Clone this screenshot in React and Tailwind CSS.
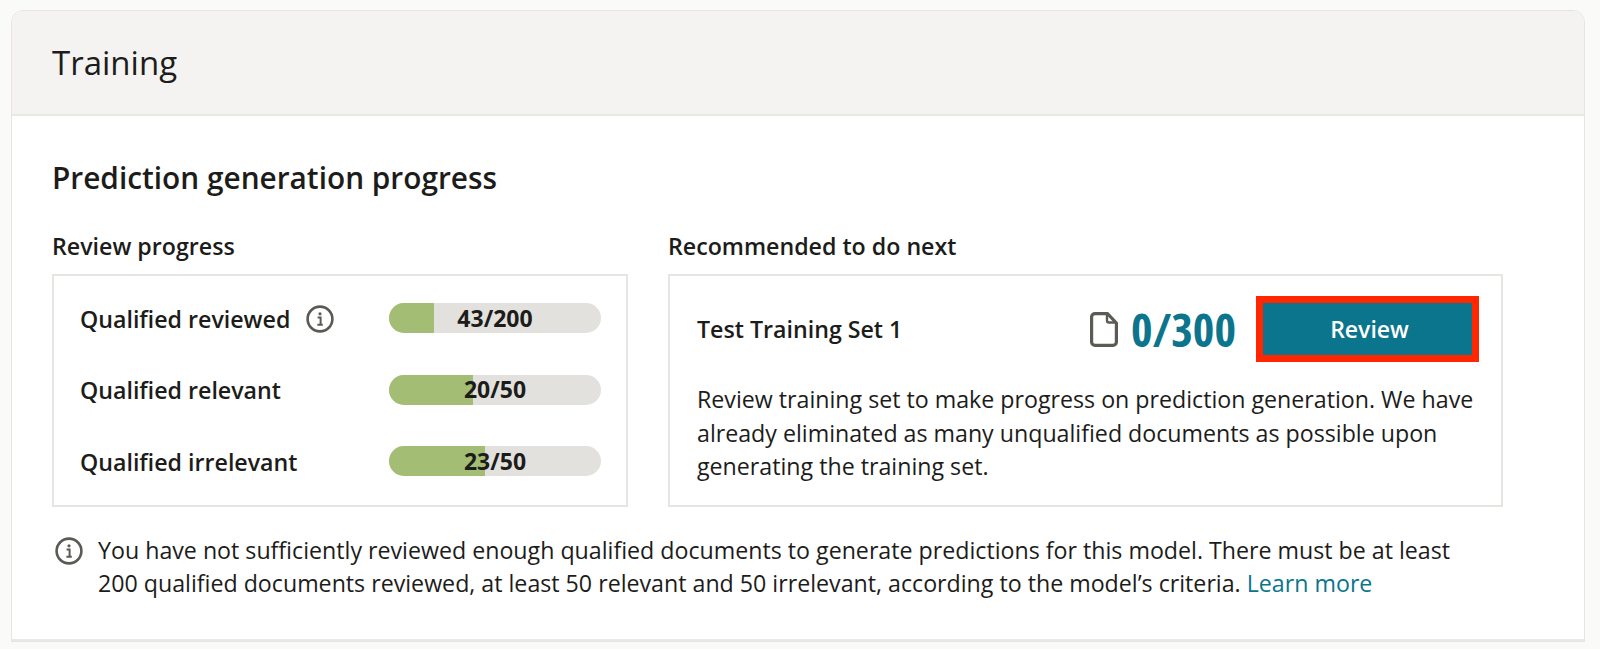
const rows = [
  { label: "Qualified reviewed", value: "43/200", fill: 45, info: true },
  { label: "Qualified relevant", value: "20/50", fill: 84 },
  { label: "Qualified irrelevant", value: "23/50", fill: 96 },
];

function InfoIcon() {
  return (
    <svg width="28" height="28" viewBox="0 0 28 28" fill="none" className="shrink-0">
      <circle cx="14" cy="14" r="12.4" stroke="#5c5a54" strokeWidth="2.6" />
      <circle cx="14" cy="8.8" r="1.6" fill="#5c5a54" />
      <path d="M11.6 12.6h3v7M11.4 19.8h5.4" stroke="#5c5a54" strokeWidth="2" />
    </svg>
  );
}

function DocIcon() {
  return (
    <svg width="28" height="35" viewBox="0 0 28 35" fill="none" className="shrink-0">
      <path
        d="M5 1.6h12.5L26.4 11v19a3.4 3.4 0 0 1-3.400 3.400H5A3.400 3.400 0 0 1 1.600 30V5A3.400 3.400 0 0 1 5 1.600Z"
        stroke="#5c5a54"
        strokeWidth="3.200"
        strokeLinejoin="round"
      />
      <path d="M17 2v6.500a2 2 0 0 0 2 2h7" stroke="#5c5a54" strokeWidth="2.400" />
    </svg>
  );
}

function ProgressRow({ row }) {
  return (
    <div className="flex items-center h-[30px]">
      <div className="w-[309px] pt-[2px] flex items-center gap-[16px] text-[23.2px] font-semibold text-[#1c1c1a]">
        <span>{row.label}</span>
        {row.info && <InfoIcon />}
      </div>
      <div className="relative w-[212px] h-[30px] rounded-full bg-[#e2e1dd] overflow-hidden">
        <div className="h-full bg-[#a3bd74]" style={{ width: row.fill }} />
        <div className="absolute inset-0 flex items-center justify-center text-[23px] font-bold text-[#1c1c1a]">
          {row.value}
        </div>
      </div>
    </div>
  );
}

export default function App() {
  return (
    <div className="h-[649px] overflow-hidden bg-[#fafaf9] pt-[10px] pl-[11px] pr-[15px] font-['Open_Sans',sans-serif] text-[#1c1c1a]">
      <div className="bg-white border border-[#e6e5e1] rounded-t-[12px] overflow-hidden">
        {/* header */}
        <div className="h-[105px] bg-[#f4f3f1] border-b-2 border-[#e9e8e4] flex items-center pl-[40px]">
          <h1 className="text-[33px] font-normal">Training</h1>
        </div>

        <div className="px-[40px] pt-[42px] h-[525px] border-b-2 border-[#e9e8e4]">
          <h2 className="text-[29.8px] leading-[40px] font-semibold">Prediction generation progress</h2>

          <div className="flex gap-[40px] mt-[31px]">
            <div className="w-[576px]">
              <h3 className="text-[23.2px] leading-[34px] font-semibold">Review progress</h3>
              <div className="mt-[11px] h-[233px] border-2 border-[#e6e5e1] pl-[26px] pt-[27px] flex flex-col gap-[41.500px]">
                {rows.map((row) => (
                  <ProgressRow key={row.label} row={row} />
                ))}
              </div>
            </div>

            <div className="w-[835px]">
              <h3 className="text-[23.2px] leading-[34px] font-semibold">Recommended to do next</h3>
              <div className="mt-[11px] h-[233px] border-2 border-[#e6e5e1] pl-[27px] pr-[22px] pt-[20px]">
                <div className="flex items-center h-[66px]">
                  <span className="text-[23.2px] font-semibold">Test Training Set 1</span>
                  <div className="ml-auto flex items-center gap-[13px]">
                    <DocIcon />
                    <span className="text-[46px] leading-none font-bold text-[#0a758c] [font-stretch:75%]">0/300</span>
                  </div>
                  <button className="ml-[20px] w-[223px] h-[66px] pl-[4px] bg-[#0a758c] border-[7px] border-[#ff2600] text-white text-[23px] font-semibold">
                    Review
                  </button>
                </div>
                <p className="mt-[21px] text-[23.2px] leading-[33.500px]">
                  Review training set to make progress on prediction generation. We have already eliminated as many unqualified documents as possible upon generating the training set.
                </p>
              </div>
            </div>
          </div>

          <div className="flex gap-[15px] mt-[27px]">
            <div className="pt-[3px] ml-[3px]">
              <InfoIcon />
            </div>
            <p className="w-[1380px] text-[23.2px] leading-[33px]">
              You have not sufficiently reviewed enough qualified documents to generate predictions for this model. There must be at least 200 qualified documents reviewed, at least 50 relevant and 50 irrelevant, according to the model’s criteria.{" "}
              <a className="text-[#0a758c]">Learn more</a>
            </p>
          </div>
        </div>
      </div>
    </div>
  );
}
